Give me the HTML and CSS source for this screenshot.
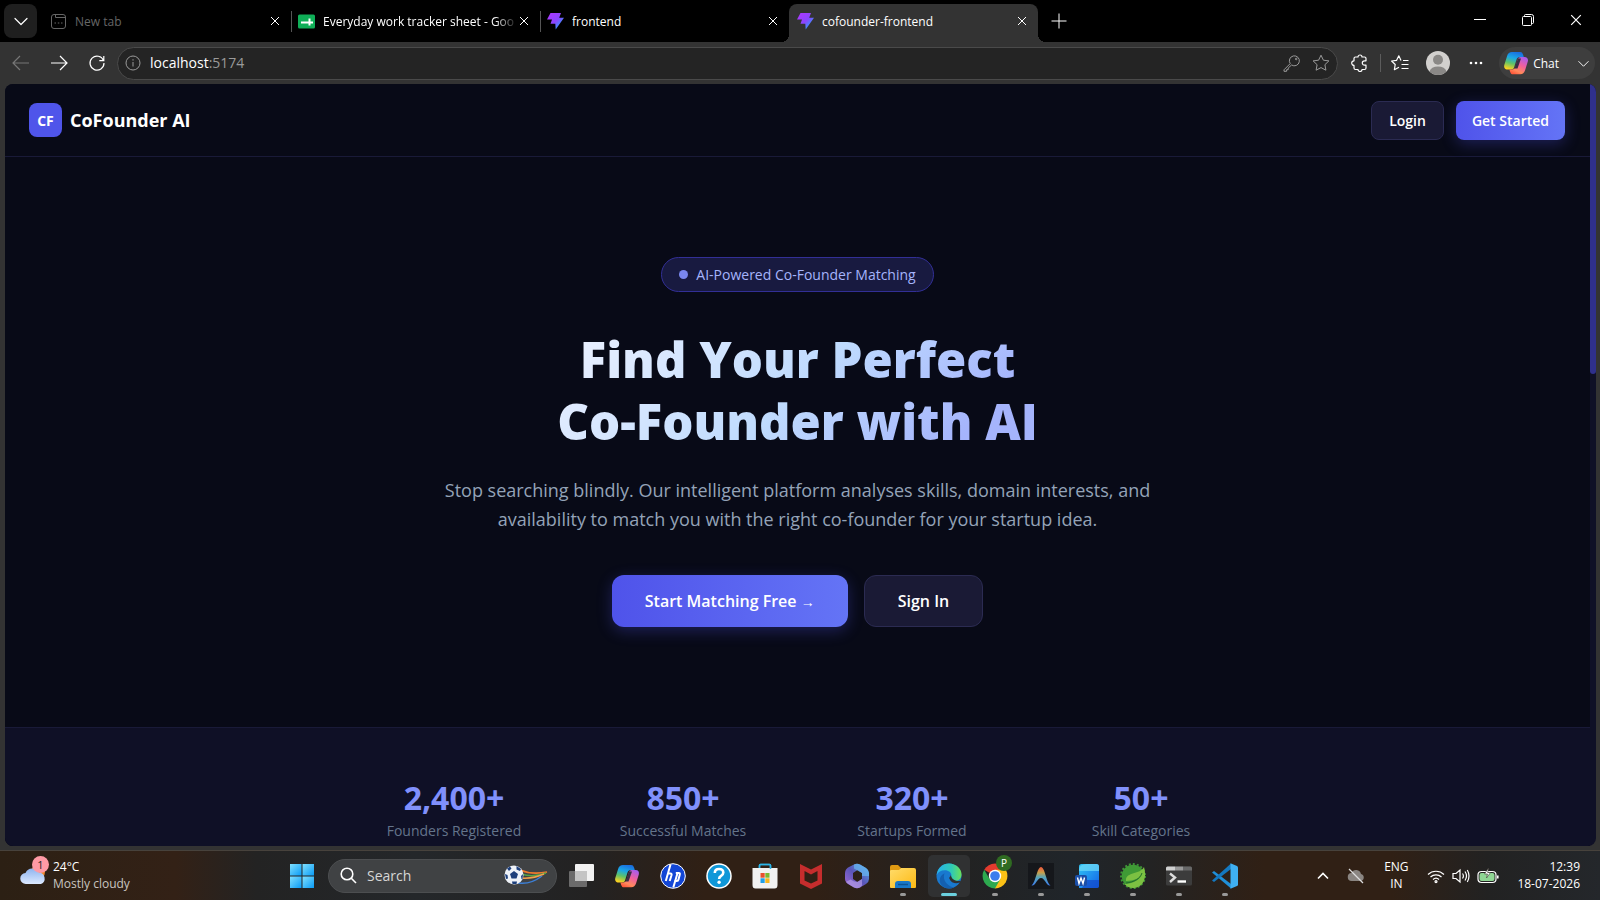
FILE: index.html
```
<!DOCTYPE html>
<html lang="en">
<head>
    <meta charset="UTF-8">
    <meta name="viewport" content="width=device-width, initial-scale=1.0">
    <title>cofounder-frontend</title>
    <link rel="stylesheet" href="styles.css">
</head>
<body>
    <!-- shared icons -->
    <svg class="defs" aria-hidden="true">
        <defs>
            <linearGradient id="gBolt" x1="0" y1="0" x2="1" y2="1">
                <stop offset="0.2" stop-color="#a33cff"/><stop offset="0.5" stop-color="#8b45ff"/><stop offset="0.75" stop-color="#3f8cff"/>
            </linearGradient>
            <linearGradient id="gCopA" x1="0.6" y1="0" x2="0.3" y2="1">
                <stop offset="0" stop-color="#1a6fe0"/><stop offset="0.35" stop-color="#1ba8e6"/><stop offset="0.65" stop-color="#5ec26a"/><stop offset="1" stop-color="#ffd21f"/>
            </linearGradient>
            <linearGradient id="gCopB" x1="0.8" y1="0" x2="0.3" y2="1">
                <stop offset="0" stop-color="#a55cf0"/><stop offset="0.45" stop-color="#f0609c"/><stop offset="0.8" stop-color="#ff8a5c"/><stop offset="1" stop-color="#ff5a3c"/>
            </linearGradient>
            <linearGradient id="gWin" x1="0" y1="0" x2="1" y2="1">
                <stop offset="0" stop-color="#7fe0ff"/><stop offset="1" stop-color="#0a9bf5"/>
            </linearGradient>
            <linearGradient id="gCloud" x1="0" y1="0" x2="0" y2="1">
                <stop offset="0" stop-color="#8fb4ee"/><stop offset="1" stop-color="#dce9ff"/>
            </linearGradient>
            <linearGradient id="gFolder" x1="0" y1="0" x2="1" y2="1">
                <stop offset="0" stop-color="#ffdc6b"/><stop offset="1" stop-color="#fdb913"/>
            </linearGradient>
            <linearGradient id="gEdge" x1="0" y1="0" x2="1" y2="0">
                <stop offset="0" stop-color="#27b3ec"/><stop offset="0.6" stop-color="#2fc9b4"/><stop offset="1" stop-color="#6be05a"/>
            </linearGradient>
            <linearGradient id="gArc" x1="0" y1="0" x2="0" y2="1">
                <stop offset="0" stop-color="#f0563c"/><stop offset="0.3" stop-color="#c9a04a"/><stop offset="0.55" stop-color="#58a6b8"/><stop offset="1" stop-color="#3c7cf0"/>
            </linearGradient>
            <linearGradient id="gWord" x1="0" y1="0" x2="1" y2="1">
                <stop offset="0" stop-color="#2fc4f5"/><stop offset="1" stop-color="#1263e8"/>
            </linearGradient>
            <linearGradient id="gM365" x1="0" y1="1" x2="1" y2="0">
                <stop offset="0" stop-color="#a46bd8"/><stop offset="0.5" stop-color="#5a55b8"/><stop offset="1" stop-color="#4fb0ee"/>
            </linearGradient>
        </defs>
        <symbol id="i-close" viewBox="0 0 10 10"><path d="M1 1l8 8M9 1l-8 8" stroke="currentColor" fill="none"/></symbol>
        <symbol id="i-down" viewBox="0 0 14 14"><path d="M1 4.5l6 6 6-6" stroke="currentColor" stroke-width="1.2" fill="none" stroke-linecap="round" stroke-linejoin="round"/></symbol>
        <symbol id="i-bolt" viewBox="0 0 17 17"><path d="M3.5 0H14l-1.8 4.8H17L8.7 16.6l-.4-5.8H3.5L5 6.6H0z" fill="url(#gBolt)"/></symbol>
        <symbol id="i-copilot" viewBox="0 0 26 26">
            <path d="M9 2h8c1.600 0 2.500.8 3 2.500l.8 2.500H17c-2 0-3 1-3.500 2.600l-2.300 7.500C10.600 19 9.700 19.500 8 19.500H4.500C2 19.500.6 17.500 1.300 15l2.800-9C4.700 3.500 6.700 2 9 2z" fill="url(#gCopA)"/>
            <path d="M18 7h3.500c2.800 0 4 2 3.300 4.500l-2.800 9c-.7 2.300-2.400 3.800-4.600 3.800H10c-1.600 0-2.400-1-2.900-2.600l-.7-2.200H9c2 0 3-.9 3.500-2.500l2.300-7.300C15.300 8 16.300 7 18 7z" fill="url(#gCopB)"/>
            <path d="M15 8.500h3l-3.500 10h-3z" fill="#3a2f45"/>
        </symbol>
    </svg>

    <div class="desktop">
        <!-- tab strip -->
        <div class="tabstrip">
            <button class="tab-menu" aria-label="Tab actions"><svg width="14" height="14"><use href="#i-down"/></svg></button>
            <div class="tab tab-dim">
                <svg class="fav" viewBox="0 0 17 17" fill="none" stroke="currentColor"><rect x="1.500" y="1.500" width="14" height="14" rx="2.500"/><path d="M5.500 1.500v3h10M4.500 10h1.500M7.800 10h1.500M11 10h1.500"/></svg>
                <span class="tab-title">New tab</span>
                <button class="tab-close" aria-label="Close tab"><svg width="10" height="10"><use href="#i-close"/></svg></button>
            </div>
            <div class="tab tab-line">
                <svg class="fav" viewBox="0 0 17 17"><rect y="1.500" width="17" height="14" rx="1.500" fill="#0fae57"/><path d="M3 9.500h12M11.500 5.500v7" stroke="#fff" stroke-width="2" fill="none"/></svg>
                <span class="tab-title tab-fade">Everyday work tracker sheet - Goo</span>
                <button class="tab-close" aria-label="Close tab"><svg width="10" height="10"><use href="#i-close"/></svg></button>
            </div>
            <div class="tab tab-line">
                <svg class="fav"><use href="#i-bolt"/></svg>
                <span class="tab-title">frontend</span>
                <button class="tab-close" aria-label="Close tab"><svg width="10" height="10"><use href="#i-close"/></svg></button>
            </div>
            <div class="tab tab-active">
                <svg class="fav"><use href="#i-bolt"/></svg>
                <span class="tab-title">cofounder-frontend</span>
                <button class="tab-close" aria-label="Close tab"><svg width="10" height="10"><use href="#i-close"/></svg></button>
            </div>
            <button class="tab-new" aria-label="New tab"><svg width="16" height="16" viewBox="0 0 16 16"><path d="M8 0.500v15M0.500 8h15" stroke="currentColor"/></svg></button>
            <div class="window-buttons">
                <button aria-label="Minimize"><svg width="12" height="12" viewBox="0 0 12 12"><path d="M0 5.500h12" stroke="currentColor"/></svg></button>
                <button aria-label="Restore"><svg width="12" height="12" viewBox="0 0 12 12" fill="none" stroke="currentColor"><rect x=".5" y="2.500" width="9" height="9" rx="1"/><path d="M2.500 2V1.500q0-1 1-1h6q2 0 2 2v6q0 1-1 1h-.5"/></svg></button>
                <button aria-label="Close"><svg width="12" height="12" viewBox="0 0 10 10"><use href="#i-close"/></svg></button>
            </div>
        </div>

        <!-- toolbar -->
        <div class="toolbar">
            <button class="nav-btn nav-off" aria-label="Back"><svg width="18" height="18" viewBox="0 0 18 18"><path d="M17 9H1M8 2L1 9l7 7" stroke="currentColor" stroke-width="1.200" fill="none"/></svg></button>
            <button class="nav-btn" aria-label="Forward"><svg width="18" height="18" viewBox="0 0 18 18"><path d="M1 9h16M10 2l7 7-7 7" stroke="currentColor" stroke-width="1.200" fill="none"/></svg></button>
            <button class="nav-btn" aria-label="Refresh"><svg width="18" height="18" viewBox="0 0 18 18"><path d="M15.500 6.500A7 7 0 1 0 16 9M15.800 2v4.700h-4.500" stroke="currentColor" stroke-width="1.200" fill="none"/></svg></button>
            <div class="address">
                <svg width="16" height="16" viewBox="0 0 16 16" fill="none" stroke="currentColor"><circle cx="8" cy="8" r="7"/><path d="M8 7v4.500M8 4.200v1.400"/></svg>
                <a class="url" href="#"><b>localhost</b>:5174</a>
                <button aria-label="Passwords"><svg width="18" height="18" viewBox="0 0 18 18" fill="none" stroke="currentColor"><path d="M7.200 9.600L1 15.800V17.300h2.600v-1.600h1.600v-1.700l3.400-3A5 5 0 1 0 7.200 9.600z"/><circle cx="13.200" cy="5" r=".8"/></svg></button>
                <button aria-label="Add to favorites"><svg width="18" height="18" viewBox="0 0 18 18" fill="none" stroke="currentColor" stroke-linejoin="round"><path d="M9 1.200l2.400 5 5.500.7-4 3.800 1 5.500L9 13.600l-4.900 2.600 1-5.500-4-3.800 5.500-.7z"/></svg></button>
            </div>
            <div class="tools">
                <button class="tool" aria-label="Extensions"><svg width="18" height="18" viewBox="0 0 18 18" fill="none" stroke="currentColor" stroke-width="1.200" stroke-linejoin="round"><path d="M4.500 3H7a2 2 0 0 1 4 0h2.500q1.500 0 1.500 1.500v2.300h-1.500a2.200 2.200 0 0 0 0 4.400H15V14q0 1.500-1.500 1.500H11a2 2 0 0 1-4 0H4.500Q3 15.500 3 14v-2.600a2.300 2.300 0 0 1 0-4.600V4.500Q3 3 4.500 3z"/></svg></button>
                <span class="divider"></span>
                <button class="tool" aria-label="Favorites"><svg width="18" height="18" viewBox="0 0 18 18" fill="none" stroke="currentColor" stroke-width="1.200" stroke-linejoin="round"><path d="M10 6.500L7.800 1.800 5.600 6.300l-5 .7 3.600 3.500-.8 5.200 4.600-2.500M12 6.500h5.500M10.500 10.500h7M10.500 14.500h7"/></svg></button>
                <button class="tool" aria-label="Profile"><svg width="24" height="24" viewBox="0 0 24 24"><circle cx="12" cy="12" r="12" fill="#d2d0ce"/><circle cx="12" cy="8.800" r="5" fill="#8a8886"/><path d="M3.500 20.500a8.600 6 0 0 1 17 0A12 12 0 0 1 12 24a12 12 0 0 1-8.500-3.500z" fill="#8a8886"/></svg></button>
                <button class="tool" aria-label="Settings and more"><svg width="14" height="4" viewBox="0 0 14 4" fill="currentColor"><circle cx="2" cy="2" r="1.300"/><circle cx="7" cy="2" r="1.300"/><circle cx="12" cy="2" r="1.300"/></svg></button>
                <button class="chat"><svg width="26" height="26"><use href="#i-copilot"/></svg>Chat<svg class="chat-arrow" width="11" height="11"><use href="#i-down"/></svg></button>
            </div>
        </div>

        <!-- web page -->
        <div class="viewport">
            <div class="page">
                <header class="site-header">
                    <a class="brand" href="#"><span class="brand-mark">CF</span>CoFounder AI</a>
                    <nav class="site-nav">
                        <button class="btn btn-ghost">Login</button>
                        <button class="btn btn-primary">Get Started</button>
                    </nav>
                </header>
                <section class="hero">
                    <div class="badge"><span class="dot"></span>AI-Powered Co-Founder Matching</div>
                    <h1>Find Your Perfect<br>Co-Founder with AI</h1>
                    <p>Stop searching blindly. Our intelligent platform analyses skills, domain interests, and availability to match you with the right co-founder for your startup idea.</p>
                    <div class="hero-actions">
                        <button class="btn btn-lg btn-primary">Start Matching Free <span class="arrow">→</span></button>
                        <button class="btn btn-lg btn-ghost">Sign In</button>
                    </div>
                </section>
                <section class="stats">
                    <div class="stats-grid">
                        <div class="stat"><strong>2,400+</strong><span>Founders Registered</span></div>
                        <div class="stat"><strong>850+</strong><span>Successful Matches</span></div>
                        <div class="stat"><strong>320+</strong><span>Startups Formed</span></div>
                        <div class="stat"><strong>50+</strong><span>Skill Categories</span></div>
                    </div>
                </section>
            </div>
            <div class="scrollbar"><div class="thumb"></div></div>
        </div>

        <!-- taskbar -->
        <footer class="taskbar">
            <div class="weather">
                <div class="weather-icon">
                    <svg width="27" height="27" viewBox="0 0 27 27"><circle cx="18" cy="14" r="7" fill="#f28a2e"/><path d="M6 26a5.500 5.500 0 0 1-.5-11A7.500 7.500 0 0 1 19 14.500a6 6 0 0 1 2 11.500z" fill="url(#gCloud)"/></svg>
                    <span class="count">1</span>
                </div>
                <div class="weather-text"><span>24°C</span><span class="muted">Mostly cloudy</span></div>
            </div>
            <div class="apps">
                <button class="app" aria-label="Start"><svg width="26" height="26" viewBox="0 0 26 26" fill="url(#gWin)"><rect x="1" y="1" width="11.500" height="11.500"/><rect x="13.500" y="1" width="11.500" height="11.500"/><rect x="1" y="13.500" width="11.500" height="11.500"/><rect x="13.500" y="13.500" width="11.500" height="11.500"/></svg></button>
                <label class="search">
                    <svg width="17" height="17" viewBox="0 0 17 17" fill="none" stroke="#fff" stroke-width="1.600"><circle cx="7" cy="7" r="5.800"/><path d="M11.300 11.300L16 16"/></svg>
                    <input type="text" placeholder="Search" aria-label="Search">
                    <svg width="44" height="22" viewBox="0 0 44 22" fill="none">
                        <path d="M16 5q12 5 27 2" stroke="#f07a2c" stroke-width="1.500"/><path d="M17 9q12 4 25-1" stroke="#52a447" stroke-width="1.500"/><path d="M17 13q12 1 23-4" stroke="#f2a04a" stroke-width="1.500"/><path d="M14 18q12 2 24-7" stroke="#3c7fd6" stroke-width="1.500"/>
                        <circle cx="10" cy="10" r="9.500" fill="#eef2f8"/><path d="M10 6l4 3-1.500 4.500h-5L6 9zM3 3.500l3-2 1.500 2-2.500 2.500zM12.500 1l4.500 3-1 2-3.500-1.500zM1 9l2.500 1 .5 3.500-2 .5zM19 9l-2 2 .5 3 1 .5zM8 16.500h5l-.5 2.500h-4z" fill="#1d3f7c"/>
                    </svg>
                </label>
                <button class="app" aria-label="Task view"><svg width="26" height="26" viewBox="0 0 26 26"><rect x="7" y="1" width="19" height="17" rx="1" fill="#f2f2f2"/><rect x="1" y="8" width="18" height="16" rx="1" fill="#7d7d7d" opacity=".8"/><rect x="7" y="8" width="12" height="10" fill="#c4c4c4"/></svg></button>
                <button class="app" aria-label="Copilot"><svg width="26" height="26"><use href="#i-copilot"/></svg></button>
                <button class="app" aria-label="HP"><svg width="26" height="26" viewBox="0 0 26 26"><circle cx="13" cy="13" r="12.300" fill="#1246d6" stroke="#fff"/><path d="M10.500 1.500L5.800 18M8 10.500h2.500q1.500 0 1 1.800L9.700 18M17.700 9.500L13.300 24.500M15.800 10h3q1.400 0 1 1.500l-1.300 5q-.3 1.500-1.800 1.500h-2.500" fill="none" stroke="#fff" stroke-width="2"/></svg></button>
                <button class="app" aria-label="Help"><svg width="26" height="26" viewBox="0 0 26 26"><circle cx="13" cy="13" r="12" fill="#0f97d8" stroke="#fff" stroke-width="1.500"/><path d="M8.800 10q0-4 4.200-4t4.300 3.600q0 2-2.200 3.300-2 1.200-2 3" fill="none" stroke="#fff" stroke-width="2.600"/><circle cx="13.100" cy="19.300" r="1.700" fill="#fff"/></svg></button>
                <button class="app" aria-label="Store"><svg width="26" height="26" viewBox="0 0 26 26"><path d="M7.500 7V2.500q0-1 1-1h9q1 0 1 1V7" fill="none" stroke="#2bb5e8" stroke-width="1.500"/><path d="M.5 5h25v17q0 3.500-3 3.500h-19q-3 0-3-3.500z" fill="#f1f1f1"/><path d="M8.500 10h4.200v4.700H8.500z" fill="#e8502d"/><path d="M13.300 10h4.200v4.700h-4.200z" fill="#7cb82f"/><path d="M8.500 15.300h4.200V20H8.500z" fill="#1f9fe8"/><path d="M13.300 15.300h4.200V20h-4.200z" fill="#f8b51c"/><path d="M7.500 5V2.500q0-1 1-1h9q1 0 1 1V6" fill="none" stroke="#2bb5e8" stroke-width="1.500"/></svg></button>
                <button class="app" aria-label="McAfee"><svg width="26" height="26" viewBox="0 0 26 26"><path d="M2 1l11 5.500L24 1v19.500L13 26 2 20.500zM6.500 8v9.500l6.500 3 6.500-3V8L13 11.500z" fill="#c62d2d" fill-rule="evenodd"/></svg></button>
                <button class="app" aria-label="Microsoft 365"><svg width="26" height="26" viewBox="0 0 26 26"><path d="M10 1.500q3-1.500 6 0l6 3.500q3 2 3 5v6q0 3-3 5l-6 3.500q-3 1.500-6 0l-5-3q-4-2-4-6v-5q0-4 3-6zM9 10v6l4.500 3 4.500-3v-6l-4.500-3z" fill="url(#gM365)" fill-rule="evenodd"/><path d="M10 1.500q3-1.500 6 0L22 5q3 2 3 5v3h-7v-3L10 5.500z" fill="#68b7ef" opacity=".7"/><path d="M2 19l4.500-2.500q3 2 6.500 2.500l5-3v6.500l-2 2q-3 1.500-6 0l-5-3z" fill="#b8a0ea" opacity=".65"/></svg></button>
                <button class="app running" aria-label="File Explorer"><svg width="26" height="26" viewBox="0 0 26 26"><path d="M0 4q0-2 2-2h6l3 3-2 4H0z" fill="#e09a12"/><path d="M0 8q0-1 1.500-1H9l2-2h13q2 0 2 2v17q0 1-1 1H1q-1 0-1-1z" fill="url(#gFolder)"/><path d="M5 25v-4q0-3 3-3h10q3 0 3 3v4z" fill="#1878c9"/><path d="M8 21.500h10" stroke="#0c5494" stroke-width="1.500"/></svg></button>
                <button class="app running current" aria-label="Edge"><svg width="26" height="26" viewBox="0 0 26 26"><circle cx="13" cy="13" r="12.500" fill="#1979cf"/><path d="M.7 12C1.500 5 6.500.5 13 .5c7 0 12.500 5 12.500 11 0 4.500-3.500 6.500-6.500 6.500-3 0-5-1.300-5-2.600 0-1 1.400-1.300 1.400-3.400 0-2.400-2.700-4.800-6.500-4.800C5 7.200 2 9 .7 12z" fill="url(#gEdge)"/><path d="M8.500 10.200c-2.500 7 3 13 9.700 14.200-7 3-14-1.200-14.500-7 .2-3.400 2-6 4.800-7.200z" fill="#1460b0"/><path d="M13.500 15.800c-1.200-1.200 1.400-2.200 1.300-4.300.5 4.500 4 7 9.200 6.500l1 .8c-3 2.500-10 2-11.500-3z" fill="#303132"/></svg></button>
                <button class="app running" aria-label="Chrome"><svg width="26" height="26" viewBox="0 0 26 26"><path d="M13 13L2.200 6.800A12.500 12.500 0 0 1 23.800 6.800z" fill="#e33b2e"/><path d="M13 13V6.800h10.800A12.500 12.500 0 0 1 13 25.500z" fill="#fbc116"/><path d="M13 13l5.400 3L13 25.500A12.500 12.500 0 0 1 2.200 6.800l5.400 9.300z" fill="#2da94f"/><circle cx="13" cy="13" r="6.200" fill="#fff"/><circle cx="13" cy="13" r="4.800" fill="#3b7ded"/></svg><span class="profile">P</span></button>
                <button class="app running" aria-label="Antigravity"><svg width="26" height="26" viewBox="0 0 26 26"><path d="M0 0h26v26H0z" fill="#15171b"/><path d="M3.500 22.500C8 19 9 4 13 4s5 15 9.500 18.500c-4 1-5.500-7.500-9.500-7.500s-5.500 8.500-9.500 7.500z" fill="url(#gArc)"/></svg></button>
                <button class="app running" aria-label="Word"><svg width="26" height="26" viewBox="0 0 26 26"><path d="M5 3.500Q5 1 7.500 1h15Q25 1 25 3.500v19q0 2.500-2.500 2.500H5z" fill="url(#gWord)"/><path d="M5 7q0-6 8-6h9.500Q25 1 25 3.500V8H5z" fill="#6fdcf8" opacity=".7"/><path d="M12 17h13v5.500q0 2.500-2.500 2.500H8z" fill="#1248c8" opacity=".7"/><rect x="1" y="12" width="12" height="11" rx="2" fill="#1a4ea8"/><path d="M3.500 14.500l1.500 6L7 15l2 5.500 1.500-6" fill="none" stroke="#fff" stroke-width="1.400"/></svg></button>
                <button class="app running" aria-label="Spring Tools"><svg width="26" height="26" viewBox="0 0 26 26"><circle cx="13" cy="13" r="11.300" fill="#3f9a35"/><circle cx="13" cy="13" r="12" fill="none" stroke="#3f9438" stroke-width="2" stroke-dasharray="2 2"/><path d="M24 4c3 10 0 20-10 21-4 .2-7-1-9.500-4 8-.5 14-3 17.500-9-4 4-8 5.500-16 6C5 8.500 20 12 24 4z" fill="#7cc142"/><path d="M6 20c8-1 14-4 16-10" fill="none" stroke="#236b2b"/></svg></button>
                <button class="app running" aria-label="Terminal"><svg width="26" height="26" viewBox="0 0 26 26"><rect y="3.500" width="26" height="19" rx="1.500" fill="#3c3c3c"/><path d="M0 7.500V5q0-1.500 1.500-1.500H9v4z" fill="#d0d0d0"/><path d="M9 3.500h8v4H9z" fill="#999"/><path d="M17 3.500h7.500Q26 3.500 26 5v2.500h-9z" fill="#686868"/><path d="M4 10.500l5 4-5 4.500" fill="none" stroke="#ddd" stroke-width="2.400"/><path d="M11.500 18.500H20" stroke="#fff" stroke-width="2.400"/></svg></button>
                <button class="app running" aria-label="Visual Studio Code"><svg width="26" height="26" viewBox="0 0 26 26"><path d="M0 9.500L2 8l17 13v4.500z" fill="#1f8fd8"/><path d="M0 17.500L2 19 19 6V.5z" fill="#1478bf"/><path d="M18.500.3L25 3q1 .5 1 1.500v17q0 1-1 1.500l-6.500 2.700z" fill="#3fb0f2"/></svg></button>
            </div>
            <div class="tray">
                <button aria-label="Hidden icons"><svg width="12" height="8" viewBox="0 0 12 8"><path d="M1 6.500l5-5 5 5" fill="none" stroke="#fff" stroke-width="1.600"/></svg></button>
                <svg width="18" height="16" viewBox="0 0 18 16"><path d="M5 13a4 4 0 0 1-.5-8A5 5 0 0 1 14 6a3.600 3.600 0 0 1 0 7z" fill="#8a8581"/><path d="M2 1l14 14" stroke="#ddd" stroke-width="1.300"/></svg>
                <button class="lang">ENG<br>IN</button>
                <div class="status">
                    <svg width="18" height="16" viewBox="0 0 18 16" fill="none" stroke="#fff" stroke-width="1.200"><path d="M1 6.500a11.500 11.500 0 0 1 16 0M3.500 9a8 8 0 0 1 11 0M6 11.500a4.500 4.500 0 0 1 6 0"/><circle cx="9" cy="13.600" r="1"/></svg>
                    <svg width="18" height="16" viewBox="0 0 18 16" fill="none" stroke="#fff" stroke-width="1.200"><path d="M1 5.500h3L8 2v12l-4-3.500H1zM10.500 5.500q1.800 2.500 0 5M13 3.500q3 4.500 0 9M15.300 2q3.400 6 0 12"/></svg>
                    <svg width="22" height="16" viewBox="0 0 22 16" fill="none" stroke="#fff" stroke-width="1.200"><rect x="1" y="3.500" width="18" height="11" rx="3.500"/><rect x="2.500" y="5" width="15" height="8" rx="2" fill="#8fd694" stroke="none"/><path d="M20.800 7.500v3" stroke-width="1.600"/><path d="M11.500 0L7.500 6h3l-1 4 4-5.500h-2.800z" fill="#fff" stroke="#3a3530" stroke-width=".6"/></svg>
                </div>
                <div class="clock"><span>12:39</span><span>18-07-2026</span></div>
            </div>
        </footer>
    </div>
</body>
</html>
```
FILE: styles.css
```
* {
    box-sizing: border-box;
}

body {
    margin: 0;
    background: #333;
    color: #fff;
    font-family: "Open Sans", "Noto Sans", sans-serif;
    font-size: 12px;
}

button {
    margin: 0;
    padding: 0;
    border: 0;
    background: none;
    color: inherit;
    font: inherit;
    cursor: pointer;
}

svg {
    display: block;
    flex-shrink: 0;
}

a {
    color: inherit;
    text-decoration: none;
}

.defs {
    position: absolute;
    width: 0;
    height: 0;
}

.desktop {
    display: flex;
    flex-direction: column;
    height: 100vh;
    overflow: hidden;
}

/* tab strip */
.tabstrip {
    display: flex;
    align-items: stretch;
    height: 42px;
    padding: 4px 0 0 4px;
    background: #000;
    flex-shrink: 0;
}

.tab-menu {
    display: flex;
    align-items: center;
    justify-content: center;
    width: 33px;
    height: 34px;
    margin-right: 5px;
    border-radius: 8px;
    background: #1f1f1f;
    flex-shrink: 0;
}

.tab {
    position: relative;
    display: flex;
    align-items: center;
    flex: 0 1 249px;
    min-width: 0;
    gap: 8px;
    padding: 0 6px 4px 8px;
}

.tab-dim {
    color: #666;
}

.tab-line {
    padding-left: 7px;
}

.tab-line::before {
    content: "";
    position: absolute;
    left: 0;
    top: 7px;
    width: 1px;
    height: 21px;
    background: #555;
}

.tab-active {
    background: #333;
    border-radius: 8px 8px 0 0;
}

.tab-active::before,
.tab-active::after {
    content: "";
    position: absolute;
    bottom: 0;
    width: 8px;
    height: 8px;
}

.tab-active::before {
    left: -8px;
    background: radial-gradient(circle at 0 0, transparent 8px, #333 8px);
}

.tab-active::after {
    right: -8px;
    background: radial-gradient(circle at 100% 0, transparent 8px, #333 8px);
}

.fav {
    width: 17px;
    height: 17px;
}

.tab-title {
    flex: 1;
    overflow: hidden;
    white-space: nowrap;
}

.tab-fade {
    -webkit-mask-image: linear-gradient(90deg, #000 88%, transparent);
    mask-image: linear-gradient(90deg, #000 88%, transparent);
}

.tab-close {
    display: flex;
    align-items: center;
    justify-content: center;
    width: 20px;
    height: 20px;
    margin-left: -12px;
    color: #fff;
}

.tab-new {
    display: flex;
    align-items: center;
    justify-content: center;
    width: 42px;
    padding-bottom: 4px;
}

.window-buttons {
    display: flex;
    margin-left: auto;
}

.window-buttons button {
    display: flex;
    align-items: center;
    justify-content: center;
    width: 48px;
    padding-bottom: 6px;
}

/* toolbar */
.toolbar {
    display: flex;
    align-items: center;
    height: 42px;
    padding-left: 2px;
    background: #333;
    flex-shrink: 0;
}

.nav-btn {
    display: flex;
    align-items: center;
    justify-content: center;
    width: 38px;
    height: 32px;
}

.nav-off {
    color: #777;
}

.address {
    display: flex;
    align-items: center;
    flex: 1;
    gap: 11px;
    height: 33px;
    margin-left: 1px;
    padding: 0 7px;
    border: 1px solid #4a4a4a;
    border-radius: 17px;
    background: #242424;
    color: #9a9a9a;
}

.url {
    flex: 1;
    margin-left: -2px;
    padding-bottom: 2px;
    font-size: 14px;
}

.url b {
    color: #fff;
    font-weight: 400;
}

.tools {
    display: flex;
    align-items: center;
    padding: 0 5px 0 3px;
}

.tool {
    display: flex;
    align-items: center;
    justify-content: center;
    width: 38px;
    height: 32px;
}

.divider {
    width: 1px;
    height: 18px;
    margin-left: 1px;
    background: #5c5c5c;
}

.chat {
    display: flex;
    align-items: center;
    gap: 4px;
    height: 32px;
    margin-left: 4px;
    padding: 0 6px 0 4px;
    border-radius: 16px;
    background: #3e3e3e;
}

.chat-arrow {
    margin-left: 15px;
}

/* browser viewport */
.viewport {
    display: flex;
    flex: 1;
    min-height: 0;
    margin: 0 4px 4px 5px;
    border-radius: 8px;
    background: #0f1026;
    overflow: hidden;
}

.page {
    flex: 1;
    overflow: hidden;
    background: #080a17;
}

.scrollbar {
    width: 6px;
}

.thumb {
    height: 38%;
    background: #2f308c;
    border-radius: 0 0 3px 3px;
}

.site-header {
    display: flex;
    align-items: center;
    justify-content: space-between;
    height: 73px;
    padding: 0 25px 0 24px;
    border-bottom: 1px solid #191a38;
}

.brand {
    display: flex;
    align-items: center;
    gap: 8px;
    font-size: 18px;
    font-weight: 700;
}

.brand-mark {
    display: flex;
    align-items: center;
    justify-content: center;
    width: 33px;
    height: 34px;
    border-radius: 8px;
    background: #4f55ea;
    font-size: 14px;
}

.site-nav {
    display: flex;
    gap: 12px;
}

.btn {
    height: 39px;
    padding: 0 17px;
    border: 1px solid transparent;
    border-radius: 8px;
    font-size: 14px;
    font-weight: 600;
}

.btn-ghost {
    border-color: #2b2b52;
    background: #1a1a35;
}

.btn-primary {
    padding: 0 16px;
    border: 0;
    background: linear-gradient(90deg, #4f53ea, #6474f6);
    box-shadow: 0 4px 15px rgba(79, 83, 234, 0.3);
}

.btn-lg {
    height: 52px;
    padding: 0 33px;
    border-radius: 12px;
    font-size: 16px;
}

.arrow {
    font-size: 14px;
}

/* hero */
.hero {
    display: flex;
    flex-direction: column;
    align-items: center;
    padding: 100px 24px;
    text-align: center;
}

.badge {
    display: flex;
    align-items: center;
    gap: 8px;
    height: 35px;
    padding: 0 17px;
    border: 1px solid #322f96;
    border-radius: 18px;
    background: #181a40;
    color: #a5b4fc;
    font-size: 14px;
}

.dot {
    width: 9px;
    height: 9px;
    border-radius: 50%;
    background: #7a87ee;
}

h1 {
    margin: 36px 0 24px;
    font-size: 49px;
    font-weight: 800;
    line-height: 62px;
    color: transparent;
    background: linear-gradient(135deg, #eef2ff 0%, #bfdbfe 50%, #a5b4fc 85%);
    background-clip: text;
    -webkit-background-clip: text;
}

.hero p {
    max-width: 720px;
    margin: 0 0 41px;
    color: #94a3b8;
    font-size: 18px;
    line-height: 29px;
}

.hero-actions {
    display: flex;
    gap: 16px;
}

/* stats */
.stats {
    padding: 49px 24px;
    border-top: 1px solid #191a38;
    background: #0f1026;
}

.stats-grid {
    display: grid;
    grid-template-columns: repeat(4, 1fr);
    gap: 16px;
    max-width: 900px;
    margin: 0 auto;
}

.stat {
    display: flex;
    flex-direction: column;
    align-items: center;
}

.stat strong {
    color: #8090fc;
    font-size: 32px;
    line-height: 42px;
}

.stat span {
    color: #64748b;
    font-size: 14px;
    line-height: 24px;
}

/* taskbar */
.taskbar {
    display: flex;
    align-items: center;
    height: 50px;
    border-top: 1px solid #47423c;
    background: linear-gradient(90deg, #2c2014 0%, #332116 11%, #232323 16%, #24272a 26%, #232222 37%, #302015 44%, #302015 51%, #222222 60%, #20252a 67%, #232323 72%, #302015 79%, #302015 87%, #222222 93%, #24272b 100%);
    flex-shrink: 0;
}

.weather {
    display: flex;
    align-items: center;
    width: 279px;
    gap: 6px;
    padding-left: 20px;
}

.weather-icon {
    position: relative;
    padding-bottom: 8px;
}

.count {
    position: absolute;
    top: -2px;
    left: 12px;
    width: 17px;
    height: 17px;
    border-radius: 50%;
    background: #ff9aa5;
    color: #222;
    font-size: 11px;
    line-height: 17px;
    text-align: center;
}

.weather-text,
.clock {
    display: flex;
    flex-direction: column;
    padding-bottom: 2px;
    line-height: 17px;
}

.muted {
    color: #c9c5c0;
}

.apps {
    display: flex;
    align-items: center;
}

.app {
    position: relative;
    display: flex;
    align-items: center;
    justify-content: center;
    width: 46px;
    height: 48px;
}

.running::after {
    content: "";
    position: absolute;
    left: 20px;
    bottom: 4px;
    width: 6px;
    height: 3px;
    border-radius: 2px;
    background: #999;
}

.current::before {
    content: "";
    position: absolute;
    inset: 3px 2px;
    border-radius: 5px;
    background: #303132;
}

.current svg {
    position: relative;
}

.current::after {
    left: 15px;
    width: 16px;
    background: #6bd0de;
}

.profile {
    position: absolute;
    top: 3px;
    right: 6px;
    width: 16px;
    height: 16px;
    border-radius: 50%;
    background: #2f6b22;
    font-size: 10px;
    line-height: 16px;
}

.search {
    display: flex;
    align-items: center;
    width: 229px;
    height: 34px;
    gap: 10px;
    margin: 0 1px 0 3px;
    padding: 0 8px 0 11px;
    border: 1px solid #4c4e50;
    border-radius: 17px;
    background: #404244;
}

.search input {
    flex: 1;
    min-width: 0;
    padding: 0;
    border: 0;
    outline: 0;
    background: none;
    color: #fff;
    font: inherit;
    font-size: 14px;
}

.search input::placeholder {
    color: #d6d6d6;
}

.tray {
    display: flex;
    align-items: center;
    margin-left: auto;
    padding-right: 20px;
}

.tray > svg {
    margin: 0 17px 0 18px;
}

.lang {
    width: 28px;
    padding-bottom: 2px;
    line-height: 17px;
    text-align: center;
}

.status {
    display: flex;
    gap: 7px;
    margin: 0 18px 0 17px;
}

.clock {
    text-align: right;
}
```
